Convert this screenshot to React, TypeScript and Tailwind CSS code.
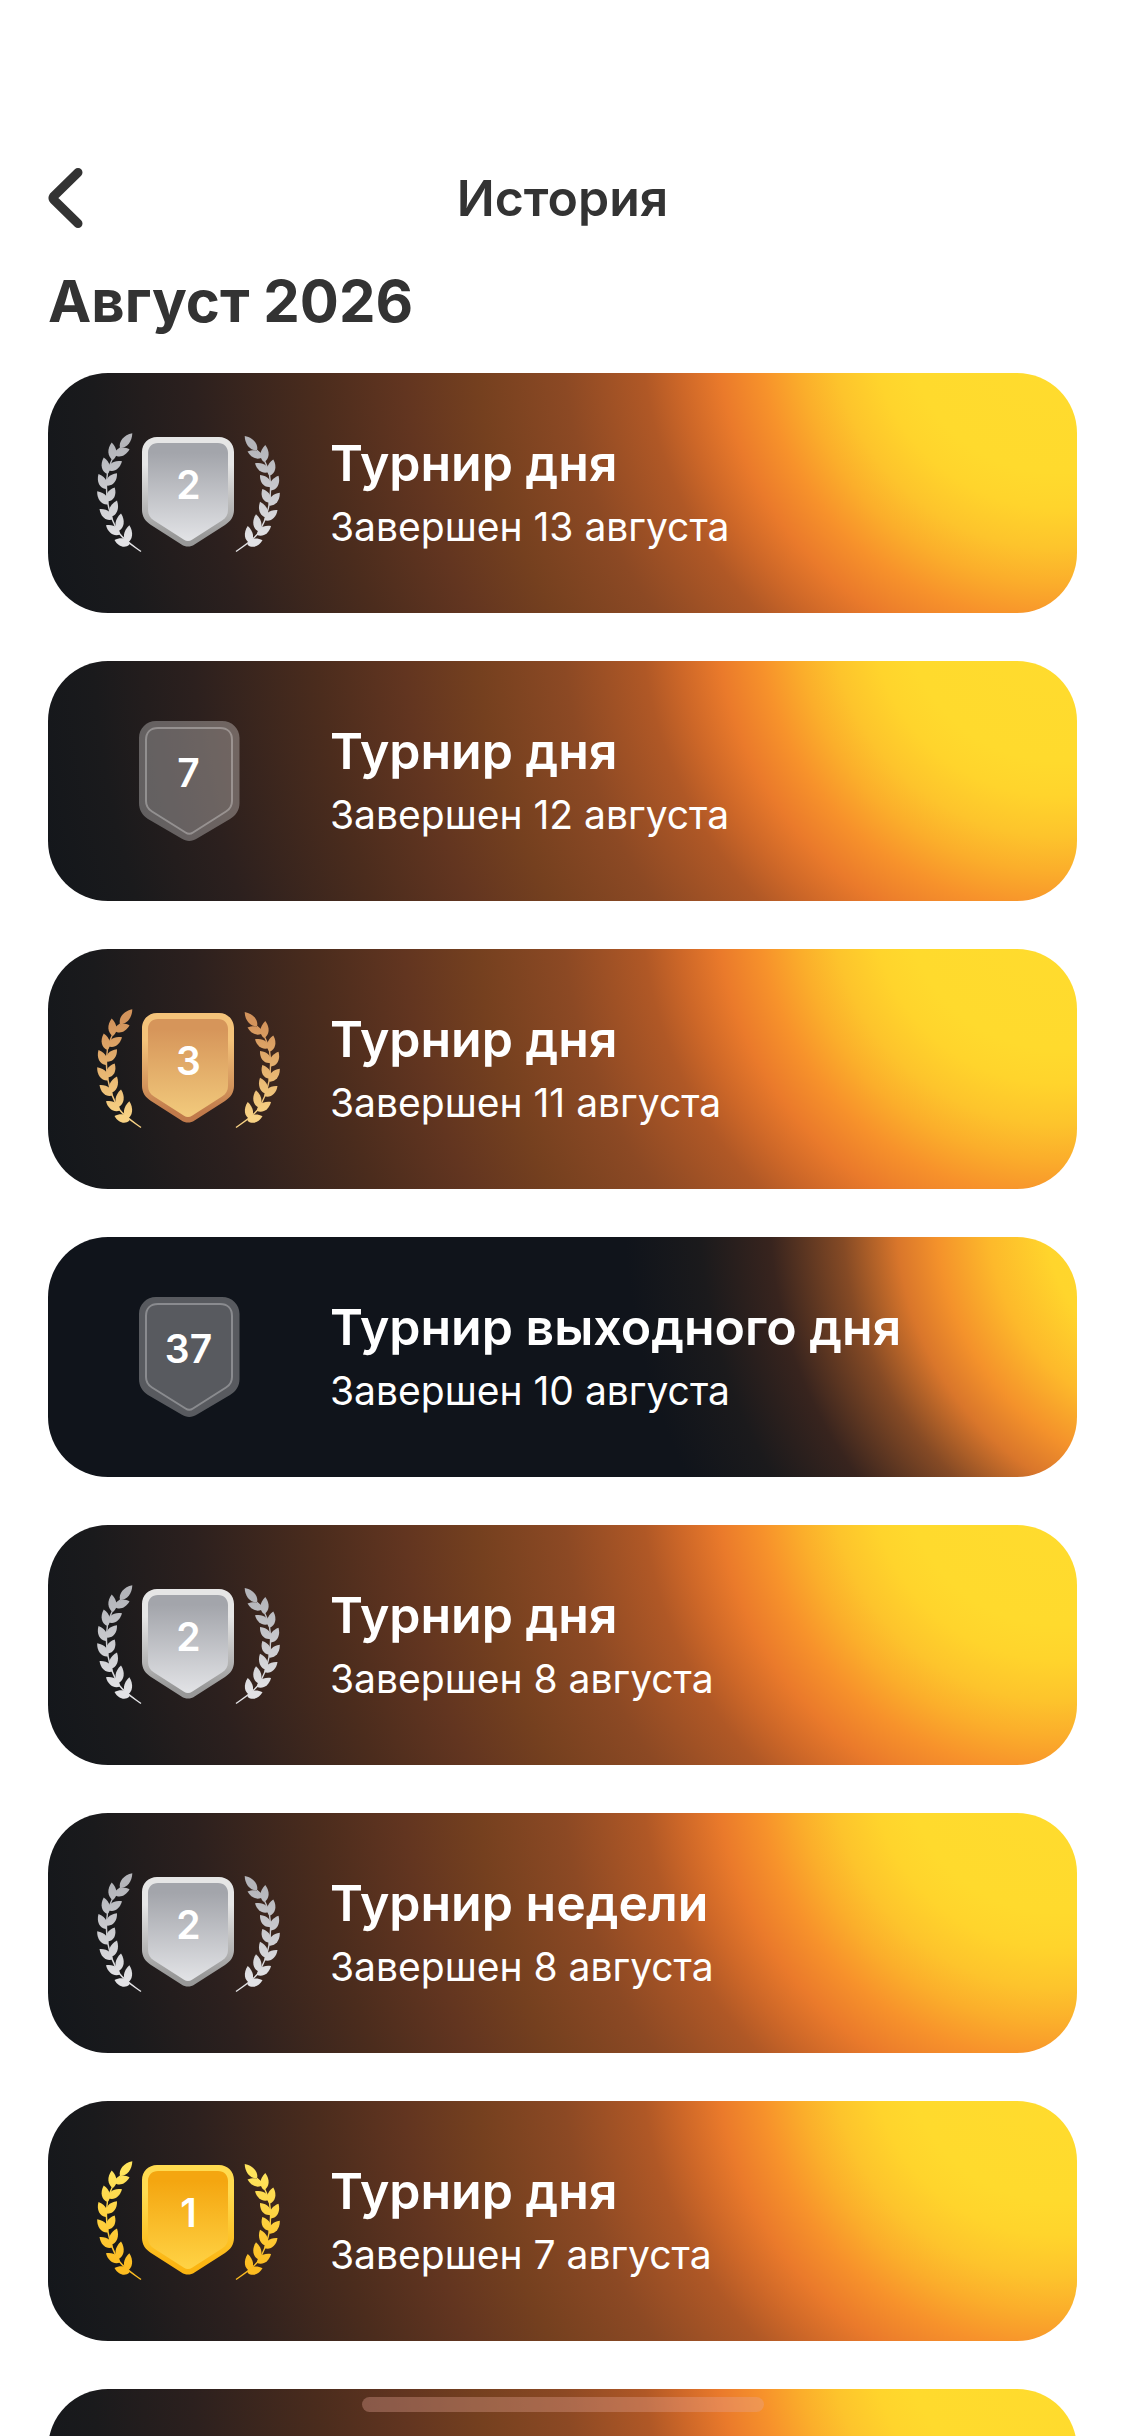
import React from "react";

type Tier = "gold" | "silver" | "bronze";

type Tournament = {
  title: string;
  date: string;
  place: number;
  weekend?: boolean;
};

const tournaments: Tournament[] = [
  { title: "Турнир дня", date: "13 августа", place: 2 },
  { title: "Турнир дня", date: "12 августа", place: 7 },
  { title: "Турнир дня", date: "11 августа", place: 3 },
  { title: "Турнир выходного дня", date: "10 августа", place: 37, weekend: true },
  { title: "Турнир дня", date: "8 августа", place: 2 },
  { title: "Турнир недели", date: "8 августа", place: 2 },
  { title: "Турнир дня", date: "7 августа", place: 1 },
];

const dailyBackground =
  "bg-[radial-gradient(circle_at_98%_-50px,#ffdc2e_0px,#ffda2d_150px,#ffd42c_185px,#fdc42c_225px,#fbae2b_260px,#f7922b_298px,#ea7a2b_340px,#cd6728_380px,#b05826_415px,#8c4924_495px,#75401f_580px,#623520_655px,#4b2c1d_740px,#2c201e_865px,#1a1a1c_965px,#12161b_1060px)]";
const weekendBackground =
  "bg-[radial-gradient(circle_at_112%_-20px,#ffdc2e_0px,#ffd52c_155px,#fdb92b_212px,#f4922b_264px,#d9762b_304px,#854a25_358px,#38241e_430px,#1b1a1c_500px,#10141b_575px)]";

const palette: Record<Tier, { rim: [string, string]; face: [string, string]; leaf: [string, string] }> = {
  gold: { rim: ["#ffdb50", "#fbb512"], face: ["#f4a610", "#ffd345"], leaf: ["#ffe45c", "#fdbc20"] },
  silver: { rim: ["#e6e6e6", "#989898"], face: ["#a3a5ab", "#e2e3e6"], leaf: ["#b4b5ba", "#e2e2e5"] },
  bronze: { rim: ["#f4c37a", "#c07a4b"], face: ["#d6955a", "#f2ca7c"], leaf: ["#d3935b", "#f8d284"] },
};

const tiers: Record<number, Tier> = { 1: "gold", 2: "silver", 3: "bronze" };

// Each leaf runs from its base on the stem to its tip: [baseX, baseY, tipX, tipY].
const leaves: [number, number, number, number][] = [
  [24, 15, 36.3, 0.3],
  [17, 27, 15.7, 9.5],
  [18, 21.5, 33.5, 16.3],
  [11.5, 41, 7.7, 24.5],
  [12, 37, 26, 28.3],
  [10, 56, 2.5, 41],
  [10.5, 52.5, 21, 40.3],
  [12, 71.5, 1.2, 58.3],
  [11.5, 68.5, 18.7, 54.5],
  [16.5, 86.5, 3.5, 76],
  [14.5, 84, 21, 67.5],
  [24, 101.5, 10, 92.3],
  [22.5, 98, 25, 80.5],
  [33.5, 111.5, 18.5, 107],
  [31, 110, 33.3, 92.3],
];

function leafPath([bx, by, tx, ty]: [number, number, number, number]) {
  const dx = tx - bx;
  const dy = ty - by;
  const len = Math.hypot(dx, dy);
  const nx = (-dy / len) * 5.4;
  const ny = (dx / len) * 5.4;
  const at = (k: number, s: number) => `${bx + dx * k + nx * s} ${by + dy * k + ny * s}`;
  return `M${bx} ${by}C${at(0.2, 1)} ${at(0.65, 1)} ${tx} ${ty}C${at(0.65, -1)} ${at(0.2, -1)} ${bx} ${by}Z`;
}

function Branch() {
  return (
    <>
      <path
        d="M24 15C19 20 14 29 11.5 40C10 50 10 60 12 71C14 82 18 92 23 100C28 107 36 112 45 118.5"
        fill="none"
        strokeWidth="1.4"
      />
      {leaves.map((leaf) => (
        <path key={leaf.join()} d={leafPath(leaf)} stroke="none" />
      ))}
    </>
  );
}

function Badge({ place, id }: { place: number; id: string }) {
  const tier = tiers[place];
  const colors = tier && palette[tier];
  return (
    <svg viewBox="0 0 184 120" className="h-[120px] w-[184px] shrink-0" role="img" aria-label={`Место ${place}`}>
      {colors ? (
        <>
          <defs>
            <linearGradient id={`${id}-rim`} x1="0" y1="4" x2="0" y2="114" gradientUnits="userSpaceOnUse">
              <stop offset="0" stopColor={colors.rim[0]} />
              <stop offset="0.25" stopColor={colors.rim[0]} />
              <stop offset="0.9" stopColor={colors.rim[1]} />
            </linearGradient>
            <linearGradient id={`${id}-face`} x1="0" y1="10" x2="0" y2="108" gradientUnits="userSpaceOnUse">
              <stop offset="0.1" stopColor={colors.face[0]} />
              <stop offset="1" stopColor={colors.face[1]} />
            </linearGradient>
            <linearGradient id={`${id}-leaf`} x1="0" y1="0" x2="0" y2="119" gradientUnits="userSpaceOnUse">
              <stop offset="0.1" stopColor={colors.leaf[0]} />
              <stop offset="0.9" stopColor={colors.leaf[1]} />
            </linearGradient>
          </defs>
          <g fill={`url(#${id}-leaf)`} stroke={`url(#${id}-leaf)`}>
            <Branch />
            <g transform="matrix(-1 0 0 0.9775 185 2.67)">
              <Branch />
            </g>
          </g>
          <path
            d="M61 4H123C131.5 4 138 10.5 138 19V77C138 83.5 134.5 88.5 129 92L98.5 111.5C94.5 114.3 89.5 114.3 85.5 111.5L55 92C49.5 88.5 46 83.5 46 77V19C46 10.5 52.5 4 61 4Z"
            fill={`url(#${id}-rim)`}
          />
          <path
            d="M62 10H122C128 10 132 14 132 20V77C132 81.5 130 85 126 87.5L96 106.8C93.5 108.5 90.5 108.5 88 106.8L58 87.5C54 85 52 81.5 52 77V20C52 14 56 10 62 10Z"
            fill={`url(#${id}-face)`}
          />
        </>
      ) : (
        <>
          <path
            d="M60 0H126C136 0 143.5 7.5 143.5 17V82C143.5 89 140 94.5 134 98L101 117.5C96 120.8 90.5 120.8 85.5 117.5L52 98C46.5 94.5 43 89 43 82V17C43 7.5 50.5 0 60 0Z"
            fill="#ffffff"
            fillOpacity="0.3"
          />
          <path
            d="M62 7H124C131.5 7 136 11.5 136 19V80C136 84.5 134 88 130 90.5L97 111.5C94.5 113.3 92 113.3 89.5 111.5L56 90.5C52 88 50 84.5 50 80V19C50 11.5 54.5 7 62 7Z"
            fill="none"
            stroke="#ffffff"
            strokeOpacity="0.3"
            strokeWidth="2"
          />
        </>
      )}
      <text x="92.5" y="66" textAnchor="middle" fill="#ffffff" className="text-[39px] font-semibold">
        {place}
      </text>
    </svg>
  );
}

function TournamentCard({ item, id }: { item: Tournament; id: string }) {
  return (
    <li
      className={`flex h-60 shrink-0 items-center gap-[50px] rounded-[60px] px-12 text-white ${
        item.weekend ? weekendBackground : dailyBackground
      }`}
    >
      <Badge place={item.place} id={id} />
      <div className="min-w-0 flex-1">
        <h3 className="text-[50px] leading-[64px] font-semibold">{item.title}</h3>
        <p className="mt-1 text-[39px] leading-[56px]">Завершен {item.date}</p>
      </div>
    </li>
  );
}

export default function App() {
  return (
    <div className="flex h-screen flex-col overflow-hidden bg-white font-['Inter','Liberation_Sans',sans-serif] text-[#333333]">
      <header className="grid shrink-0 grid-cols-[1fr_auto_1fr] items-center px-12 pt-36">
        <button type="button" aria-label="Назад" className="flex h-[108px] w-24 items-center justify-start">
          <svg viewBox="0 0 36 60" className="h-[60px] w-9" fill="none" stroke="#333333" strokeWidth="9" strokeLinecap="round" strokeLinejoin="round">
            <path d="M30 4.5L5.5 28.5Q4.5 30 5.5 31.5L30 55.5" />
          </svg>
        </button>
        <h1 className="text-[50px] leading-[64px] font-semibold">История</h1>
      </header>
      <main className="min-h-0 flex-1 overflow-hidden px-12 pt-[13px]">
        <h2 className="text-[58px] leading-[72px] font-bold">Август 2026</h2>
        <ul className="mt-9 flex flex-col gap-12">
          {tournaments.map((item, index) => (
            <TournamentCard key={item.title + item.date} item={item} id={`badge-${index}`} />
          ))}
          <li aria-hidden="true" className={`h-60 shrink-0 rounded-[60px] ${dailyBackground}`} />
        </ul>
      </main>
      <div className="fixed bottom-6 left-1/2 h-[15px] w-[402px] -translate-x-1/2 rounded-full bg-[#e4a698]/35" />
    </div>
  );
}
